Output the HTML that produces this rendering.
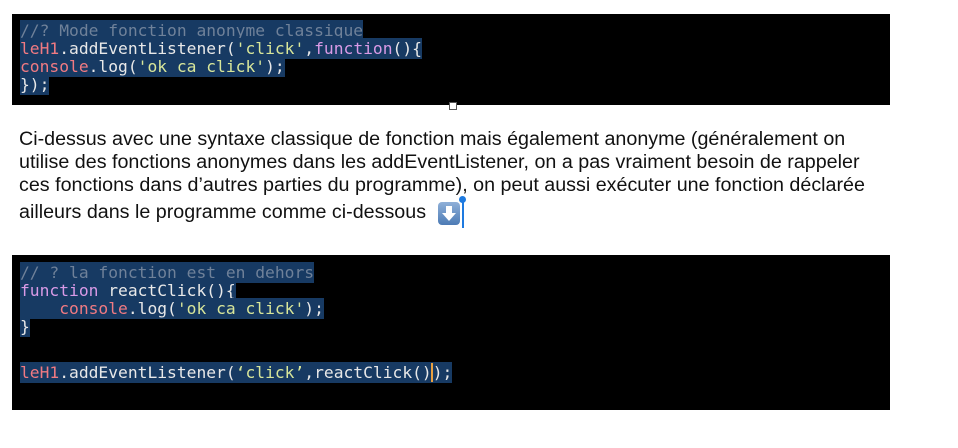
<!DOCTYPE html>
<html><head><meta charset="utf-8"><style>
body{margin:0;width:958px;height:448px;background:#fff;position:relative;overflow:hidden}
.blk{position:absolute;left:12px;width:878px;background:#000}
.code{position:absolute;left:20px;font-family:"DejaVu Sans Mono","Liberation Mono",monospace;font-size:16.3px;line-height:18px;white-space:pre;color:#e8e8e8;font-weight:500}
.code span.l{background:#173a63;padding:1px 0}
.c{color:#6f8199}.r{color:#f07a82}.s{color:#d8e69a}.p{color:#d99ae6}.w{color:#f0f0f0}
.t{position:absolute;left:19px;font-family:"Liberation Sans",sans-serif;font-size:19.7px;color:#111;white-space:pre}
</style></head><body>
<div class="blk" style="top:14px;height:91px"></div>
<div class="code" style="top:22px"><span class="l"><span class="c">//? Mode fonction anonyme classique</span></span>
<span class="l"><span class="r">leH1</span>.addEventListener(<span class="s">'click'</span>,<span class="p">function</span>(){</span>
<span class="l"><span class="r">console</span>.log(<span class="s">'ok ca click'</span>);</span>
<span class="l">});</span></div>
<div style="position:absolute;left:449px;top:102px;width:6px;height:6px;border:1px solid #555;background:#fff"></div>

<div class="t" style="top:128px">Ci-dessus avec une syntaxe classique de fonction mais également anonyme (généralement on</div>
<div class="t" style="top:151px">utilise des fonctions anonymes dans les addEventListener, on a pas vraiment besoin de rappeler</div>
<div class="t" style="top:174px">ces fonctions dans d’autres parties du programme), on peut aussi exécuter une fonction déclarée</div>
<div class="t" style="top:201px">ailleurs dans le programme comme ci-dessous</div>
<div style="position:absolute;left:438px;top:202px;width:22px;height:23px;border-radius:4px;background:linear-gradient(#8fb0d8,#4d7bb5)">
<svg width="22" height="23" viewBox="0 0 22 23"><path d="M8 4h6v7h4l-7 8-7-8h4z" fill="#fff"/></svg></div>
<div style="position:absolute;left:462px;top:200px;width:2px;height:28px;background:#1e7ae0"></div>
<div style="position:absolute;left:459px;top:196px;width:7px;height:7px;border-radius:50%;background:#1e7ae0"></div>

<div class="blk" style="top:255px;height:155px"></div>
<div class="code" style="top:264px"><span class="l"><span class="c">// ? la fonction est en dehors</span></span>
<span class="l"><span class="p">function</span> reactClick(){</span>
<span class="l">    <span class="r">console</span>.log(<span class="s">'ok ca click'</span>);</span>
<span class="l">}</span></div>
<div class="code" style="top:364px"><span class="l"><span class="r">leH1</span>.addEventListener(<span class="s">‘click’</span>,reactClick()<span style="border-left:2px solid #e8a040;margin-left:-1px"></span>);</span></div>
</body></html>
